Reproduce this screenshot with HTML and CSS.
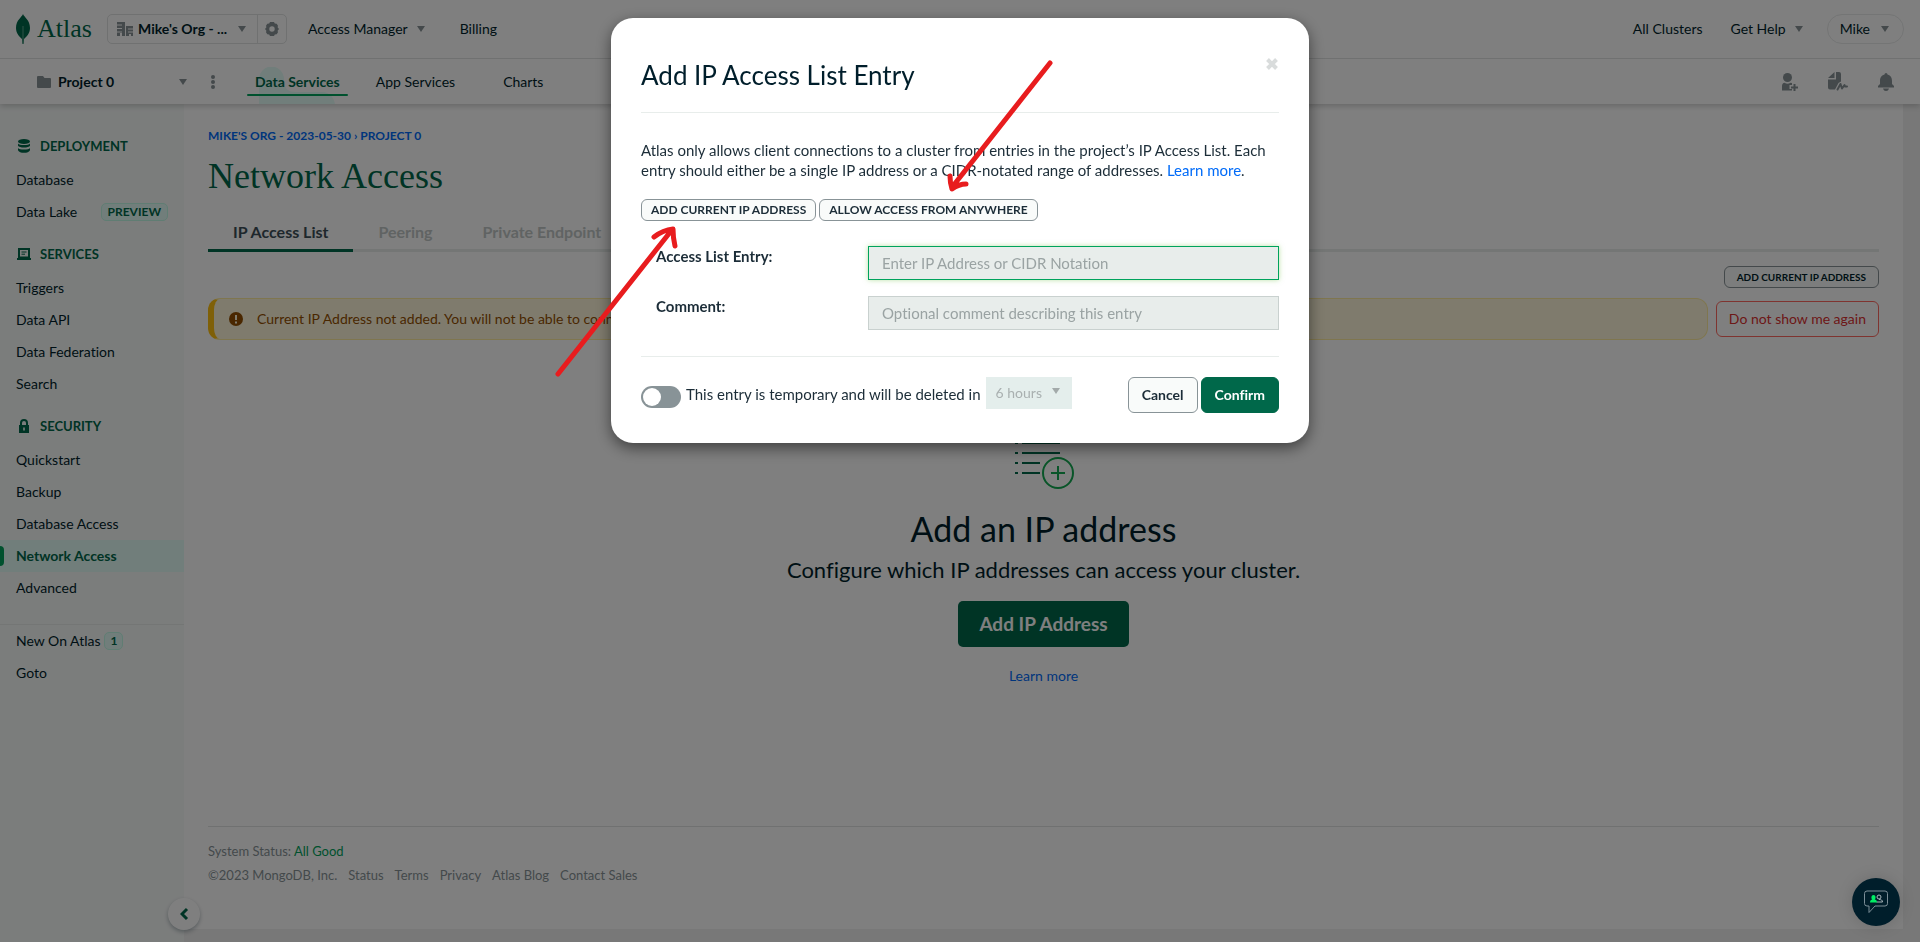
FILE: index.html
```
<!DOCTYPE html>
<html lang="en">
<head>
<meta charset="utf-8">
<title>Network Access | Atlas</title>
<link rel="stylesheet" href="styles.css">
</head>
<body>
<svg class="defs" width="0" height="0" aria-hidden="true">
  <symbol id="caret" viewBox="0 0 8 6"><path d="M0 0h8L4 6z" fill="currentColor"/></symbol>
</svg>
<div class="page">
  <header class="header">
    <div class="bar bar-org">
      <a class="logo" href="#">
        <svg width="14" height="30" viewBox="0 0 14 30"><path d="M7 0c1 3 7 6 7 14 0 6-4 9-6 11l-.5 5h-1L6 25C4 23 0 20 0 14 0 6 6 3 7 0z" fill="#00684a"/><path d="M7 12v16" stroke="#5fa590" stroke-width="1"/></svg>
        <span>Atlas</span>
      </a>
      <div class="org">
        <button class="org-pick" type="button">
          <svg width="16" height="15" viewBox="0 0 16 15"><path d="M0 0h8v14H5v-3H3v3H0zM9 4h7v10h-2v-2h-2v2H9z" fill="#889397"/><path d="M0 3h5M0 6.500h5M0 10h5M11 7h5M11 10h5" stroke="#fff" stroke-width="1"/></svg>
          <b>Mike's Org - ...</b>
          <svg class="caret" width="8" height="6"><use href="#caret"/></svg>
        </button>
        <button class="org-gear" type="button" aria-label="Settings">
          <svg width="14" height="14" viewBox="0 0 14 14"><path fill="#889397" fill-rule="evenodd" d="M5 0h4l.8 1.600 1.900.1 1.300 2-.4 1.600L14 7l-1.400 1.700.4 1.600-1.300 2-1.900.1L9 14H5l-.8-1.600-1.900-.1-1.300-2 .4-1.600L0 7l1.400-1.700L1 3.700l1.300-2 1.900-.1zM7 4.300a2.700 2.700 0 1 0 0 5.400 2.700 2.700 0 0 0 0-5.400z"/></svg>
        </button>
      </div>
      <nav class="org-nav"><a href="#">Access Manager <svg class="caret" width="8" height="6"><use href="#caret"/></svg></a><a href="#">Billing</a></nav>
      <nav class="user-nav"><a href="#">All Clusters</a><a href="#">Get Help <svg class="caret" width="8" height="6"><use href="#caret"/></svg></a>
        <button class="user" type="button">Mike <svg class="caret" width="8" height="6"><use href="#caret"/></svg></button></nav>
    </div>
    <div class="bar bar-project">
      <button class="project" type="button">
        <svg width="14" height="12" viewBox="0 0 14 12"><path fill="#889397" d="M1 0h5l1.500 2H13a1 1 0 0 1 1 1v8a1 1 0 0 1-1 1H1a1 1 0 0 1-1-1V1a1 1 0 0 1 1-1z"/></svg>
        <b>Project 0</b>
        <svg class="caret" width="8" height="6"><use href="#caret"/></svg>
      </button>
      <button class="more" type="button" aria-label="Project options"><svg width="4" height="14" viewBox="0 0 4 14" fill="#889397"><circle cx="2" cy="2" r="2"/><circle cx="2" cy="7" r="2"/><circle cx="2" cy="12" r="2"/></svg></button>
      <nav class="services">
        <a class="on" href="#"><svg class="blob" width="76" height="37" viewBox="0 0 76 37"><path fill="#e3fcf7" d="M0 37V12a12 12 0 0 1 25 0c0 10 4 13 12 13h26c8 0 12 6 13 12z"/></svg><span>Data Services</span></a>
        <a href="#">App Services</a>
        <a href="#">Charts</a>
      </nav>
      <div class="tools">
        <button type="button" aria-label="Invite"><svg width="17" height="18" viewBox="0 0 17 18" fill="#889397"><circle cx="6.500" cy="4.500" r="4.500"/><path d="M1 17.500V13c0-2 1-3 2.500-3.300 2 1.300 4 1.300 6 0L11 10v2H8.500v4H11v1.500z"/><path d="M12.500 11h2v2.500H17v2h-2.500V18h-2v-2.500H10v-2h2.500z"/></svg></button>
        <button type="button" aria-label="Activity"><svg width="20" height="19" viewBox="0 0 20 19" fill="#889397"><path d="M6.500 0v6H0zM8 0h3a2 2 0 0 1 2 2v7.500L10.500 11 7 17.500H2a2 2 0 0 1-2-2v-8h8z"/><path d="M9.500 17.500l3-5.500 1.500 4.500 2.500-3.500.5 1.500h2" fill="none" stroke="#889397" stroke-width="2" stroke-linejoin="round" stroke-linecap="round"/></svg></button>
        <button type="button" aria-label="Alerts"><svg width="16" height="18" viewBox="0 0 16 18" fill="#889397"><path d="M8 0a1.500 1.500 0 0 1 1.500 1.500C13 2.500 14 5 14 8v3l2 2v1.500H0V13l2-2V8c0-3 1-5.500 4.500-6.500A1.500 1.500 0 0 1 8 0zM5 15.500h6C10.500 17.200 9.500 18 8 18s-2.500-.8-3-2.500z"/></svg></button>
      </div>
    </div>
  </header>

  <div class="shell">
    <nav class="side">
      <h2><svg width="14" height="14" viewBox="0 0 14 14" fill="#00684a"><ellipse cx="7" cy="2.500" rx="6" ry="2.500"/><path d="M1 4.500c1 2 11 2 12 0v2.300c-1 2.400-11 2.400-12 0zM1 9c1 2 11 2 12 0v2.300c-1 3.400-11 3.400-12 0z"/></svg>DEPLOYMENT</h2>
      <a href="#">Database</a>
      <a href="#">Data Lake <span class="badge preview">PREVIEW</span></a>
      <h2><svg width="14" height="12" viewBox="0 0 14 12"><path fill="#00684a" fill-rule="evenodd" d="M1 0h12v10h1v2H0v-2h1zM3 2v6.500h8V2z"/><path d="M4.500 4h5M4.500 6.200h3.500" stroke="#00684a" stroke-width="1"/></svg>SERVICES</h2>
      <a href="#">Triggers</a>
      <a href="#">Data API</a>
      <a href="#">Data Federation</a>
      <a href="#">Search</a>
      <h2><svg width="14" height="14" viewBox="0 0 14 14"><path fill="#00684a" fill-rule="evenodd" d="M3 6V4a4 4 0 0 1 8 0v2h1v8H2V6zM5 6h4V4a2 2 0 0 0-4 0zM6.200 8.500v3h1.600v-3z"/></svg>SECURITY</h2>
      <a href="#">Quickstart</a>
      <a href="#">Backup</a>
      <a href="#">Database Access</a>
      <a class="on" href="#">Network Access</a>
      <a href="#">Advanced</a>
      <hr>
      <a href="#">New On Atlas <span class="badge">1</span></a>
      <a href="#">Goto</a>
      <button class="collapse" type="button" aria-label="Collapse navigation"><svg width="9" height="14" viewBox="0 0 9 14"><path d="M7 2L2 7l5 5" fill="none" stroke="#00684a" stroke-width="3"/></svg></button>
    </nav>

    <main class="main">
      <a class="crumbs" href="#">MIKE'S ORG - 2023-05-30 › PROJECT 0</a>
      <h1>Network Access</h1>
      <nav class="tabs"><a class="on" href="#">IP Access List</a><a href="#">Peering</a><a href="#">Private Endpoint</a></nav>
      <button class="pill small" type="button">ADD CURRENT IP ADDRESS</button>
      <div class="notice">
        <p class="alert"><svg width="14" height="14" viewBox="0 0 14 14"><circle cx="7" cy="7" r="7" fill="#944f01"/><path d="M7 3v5M7 9.500v2" stroke="#fef7db" stroke-width="2"/></svg>Current IP Address not added. You will not be able to connect</p>
        <button class="btn danger" type="button">Do not show me again</button>
      </div>
      <section class="empty">
        <svg width="60" height="64" viewBox="0 0 60 64" fill="none" stroke-width="2"><path stroke="#00684a" d="M1 17h3M8 17h38M1 27h3M8 27h38M1 37h3M8 37h18M1 47h3M8 47h18"/><circle cx="44" cy="47" r="15" stroke="#13aa52"/><path stroke="#13aa52" d="M44 40v14M37 47h14"/></svg>
        <h2>Add an IP address</h2>
        <p>Configure which IP addresses can access your cluster.</p>
        <button class="big" type="button">Add IP Address</button>
        <a href="#">Learn more</a>
      </section>
      <footer class="footer">
        <p>System Status: <a class="good" href="#">All Good</a></p>
        <p class="links"><span>©2023 MongoDB, Inc.</span><a href="#">Status</a><a href="#">Terms</a><a href="#">Privacy</a><a href="#">Atlas Blog</a><a href="#">Contact Sales</a></p>
      </footer>
    </main>
  </div>
</div>

<div class="backdrop">
  <form class="modal" role="dialog" aria-labelledby="modal-title">
    <div class="modal-head">
      <h2 id="modal-title">Add IP Access List Entry</h2>
      <button class="close" type="button" aria-label="Close"><svg width="12" height="12" viewBox="0 0 12 12"><path d="M1.500 1.500l9 9M10.500 1.500l-9 9" stroke="#d9dcdc" stroke-width="4"/></svg></button>
    </div>
    <div class="modal-body">
      <p>Atlas only allows client connections to a cluster from entries in the project’s IP Access List. Each entry should either be a single IP address or a CIDR-notated range of addresses. <a href="#">Learn more</a>.</p>
      <div class="pills"><button class="pill" type="button">ADD CURRENT IP ADDRESS</button><button class="pill" type="button">ALLOW ACCESS FROM ANYWHERE</button></div>
      <div class="field"><label for="entry">Access List Entry:</label><input class="focused" id="entry" type="text" placeholder="Enter IP Address or CIDR Notation"></div>
      <div class="field"><label for="comment">Comment:</label><input id="comment" type="text" placeholder="Optional comment describing this entry"></div>
    </div>
    <div class="modal-foot">
      <input class="toggle" id="temp" type="checkbox"><label for="temp">This entry is temporary and will be deleted in</label>
      <span class="pick"><select aria-label="Deleted in" disabled><option>6 hours</option></select><svg width="8" height="6"><use href="#caret"/></svg></span>
      <div class="actions"><button class="btn" type="button">Cancel</button><button class="btn primary" type="submit">Confirm</button></div>
    </div>
  </form>
</div>

<svg class="arrows" width="1100" height="400" viewBox="0 0 1100 400" fill="none" stroke="#e81c1e" stroke-width="5" stroke-linecap="round" stroke-linejoin="round" aria-hidden="true">
  <path d="M558 374L671 231M654 237q9-7 19-8q0 9 2 17"/>
  <path d="M1050 63L953 186M950 176q0 7 2 13q7-5 14-5"/>
</svg>

<button class="chat" type="button" aria-label="Chat">
  <svg width="24" height="24" viewBox="0 0 24 24" fill="none"><path d="M3 1h18a2.500 2.500 0 0 1 2.500 2.500v10A2.500 2.500 0 0 1 21 16H11l-6 6.500V16H3a2.500 2.500 0 0 1-2.500-2.500v-10A2.500 2.500 0 0 1 3 1z" stroke="#7c8e98"/><g stroke="#a9b5bb"><circle cx="15" cy="7" r="2"/><path d="M12.500 12h6c0-2-1.500-2.500-3.500-2.500"/></g><path fill="#00ed64" d="M6 12.500c0-2 1-2.700 2.300-3C7 8.500 7 5 9.500 5s2.500 3.500 1.200 4.500c1.300.3 2.300 1 2.300 3z"/></svg>
</button>
</body>
</html>
```

FILE: styles.css
```
* { box-sizing: border-box; }
body {
  margin: 0;
  font: 14px/20px Lato, "Liberation Sans", sans-serif;
  font-variant-ligatures: none;
  color: #001e2b;
  background: #f0f0f0;
}
h1, h2, p { margin: 0; font-weight: 400; }
a { color: inherit; text-decoration: none; }
button { font: inherit; color: inherit; background: none; border: 0; padding: 0; cursor: pointer; }
svg { display: block; flex: none; }
.defs { position: absolute; }
.caret { color: #889397; }

.page { display: flex; flex-direction: column; min-height: 100vh; }

/* Header */
.header { position: relative; z-index: 1; background: #fff; box-shadow: 0 2px 6px rgba(0, 0, 0, .2); }
.bar { display: flex; align-items: center; }
.bar-org { height: 59px; padding: 0 16px; border-bottom: 1px solid #e0e2e2; }
.logo { display: flex; align-items: center; gap: 7px; width: 91px; height: 34px; font: 26px/34px "Liberation Serif", serif; color: #00684a; }
.org { display: flex; width: 180px; height: 30px; border: 1px solid #e0e2e2; border-radius: 5px; }
.org-pick { display: flex; align-items: center; flex: 1; gap: 5px; padding: 0 11px 0 9px; white-space: nowrap; }
.org-pick .caret, .project .caret { margin-left: auto; }
.org-gear { display: flex; align-items: center; justify-content: center; width: 29px; border-left: 1px solid #e0e2e2; }
.org-nav { display: flex; gap: 35px; margin-left: 21px; }
.org-nav a, .user-nav a { display: flex; align-items: center; gap: 9px; }
.user-nav { display: flex; align-items: center; gap: 24px; margin-left: auto; }
.user-nav a:first-child { margin-right: 4px; }
.user { display: flex; align-items: center; gap: 11px; height: 30px; padding: 0 14px 0 12px; border: 1px solid #e8eaea; border-radius: 15px; }

.bar-project { height: 45px; padding-right: 26px; }
.project { display: flex; align-items: center; gap: 7px; width: 187px; padding-left: 37px; }
.more { margin-left: 24px; }
.services { display: flex; gap: 20px; align-self: stretch; margin-left: 32px; }
.services a { position: relative; display: flex; align-items: center; padding: 0 8px; }
.services a:last-child { margin-left: 12px; }
.services .on { font-weight: 700; color: #00684a; }
.services .on span { position: relative; }
.services .on::after { content: ""; position: absolute; left: 0; right: 0; bottom: 8px; height: 2px; background: #00a35c; border-radius: 1px; }
.blob { position: absolute; left: 12px; bottom: 0; }
.tools { display: flex; align-items: center; gap: 30px; margin-left: auto; }

/* Side navigation */
.shell { flex: 1; display: grid; grid-template-columns: 184px 1fr; }
.side { position: relative; padding-top: 16px; background: #f7faf9; }
.side a { display: flex; align-items: center; height: 32px; padding-left: 16px; }
.side h2 { display: flex; align-items: center; gap: 9px; height: 44px; padding: 8px 0 0 17px; font-size: 13px; font-weight: 700; color: #00684a; }
.side .on { position: relative; background: #e3fcf7; color: #00684a; font-weight: 700; }
.side .on::before { content: ""; position: absolute; left: 0; top: 6px; width: 4px; height: 20px; background: #00a35c; border-radius: 0 4px 4px 0; }
.side hr { height: 1px; margin: 20px 0 0; border: 0; background: #e8edeb; }
.badge { margin-left: 4px; padding: 0 5px; font-size: 12px; line-height: 16px; font-weight: 700; color: #00684a; background: #e3fcf7; border: 1px solid #c0fae6; border-radius: 5px; }
.preview { margin: 0 16px 0 auto; padding: 0 6px; }
.collapse { position: absolute; right: -16px; bottom: 12px; display: flex; align-items: center; justify-content: center; width: 32px; height: 32px; background: #fff; border-radius: 16px; box-shadow: 0 2px 4px rgba(0, 30, 43, .3); }

/* Main panel */
.main { display: flex; flex-direction: column; margin: 0 17px 13px 0; padding: 22px 24px 0; background: #fff; }
.crumbs { align-self: flex-start; font-size: 12px; font-weight: 700; color: #016bf8; }
.main h1 { margin-top: 8px; font: 36px/44px "Liberation Serif", serif; color: #00684a; }
.tabs { display: flex; margin-top: 20px; font-size: 16px; font-weight: 700; color: #c1c7c6; border-bottom: 3px solid #e8edeb; }
.tabs a { padding: 4px 25px 7px; border-bottom: 3px solid transparent; margin-bottom: -3px; line-height: 20px; }
.tabs .on { color: #3d4f58; border-color: #00684a; }
.pill { height: 22px; padding: 0 9px; font-size: 12px; line-height: 20px; font-weight: 700; background: #f9fbfa; border: 1px solid #889397; border-radius: 6px; }
.small { align-self: flex-end; margin-top: 14px; padding: 0 12px; font-size: 10px; }
.notice { display: flex; align-items: center; gap: 8px; margin-top: 10px; }
.alert { display: flex; align-items: center; flex: 1; gap: 14px; height: 42px; padding-left: 15px; color: #944f01; background: #fef7db; border: 1px solid #ffec9e; border-left: 6px solid #ffc010; border-radius: 12px; }
.btn { height: 36px; padding: 0 13px; font-size: 14px; font-weight: 700; background: #f9fbfa; border: 1px solid #889397; border-radius: 6px; }
.danger { padding: 0 12px; font-weight: 400; color: #db3030; background: #fff; border-color: #ff6960; }
.empty { display: flex; flex-direction: column; align-items: center; margin-top: 86px; }
.empty h2 { margin-top: 19px; font-size: 34px; line-height: 40px; }
.empty p { margin-top: 5px; font-size: 22px; line-height: 32px; }
.big { height: 46px; margin: 15px 0 19px; padding: 0 21px; font-size: 19px; font-weight: 700; color: #fff; background: #00684a; border-radius: 5px; }
.empty a { color: #016bf8; }
.footer { margin-top: auto; padding: 14px 0 44px; font-size: 13px; color: #889397; border-top: 1px solid #e0e2e2; }
.good { color: #00a35c; }
.links { display: flex; gap: 11px; margin-top: 4px; }

/* Dialog */
.backdrop { position: fixed; inset: 0; z-index: 2; padding-top: 18px; background: rgba(0, 0, 0, .5); }
.modal { width: 698px; max-width: 100%; margin: 0 auto; padding: 30px; font-size: 15px; color: #1c2d38; background: #fff; border-radius: 22px; box-shadow: 0 5px 15px rgba(0, 0, 0, .5); }
.modal-head { display: flex; justify-content: space-between; align-items: flex-start; padding: 10px 0 20px; border-bottom: 1px solid #e8edeb; }
.modal-head h2 { font-size: 26px; line-height: 34px; color: #001e2b; }
.close { padding: 0 1px; }
.modal-body { padding: 27px 0 26px; border-bottom: 1px solid #e8edeb; }
.modal-body a { color: #016bf8; }
.pills { display: flex; gap: 3px; margin: 19px 0 25px; }
.field { display: flex; padding-left: 15px; }
.field + .field { margin-top: 16px; }
.field label { width: 212px; font-weight: 700; }
.field input { flex: 1; height: 34px; padding: 0 13px; font: inherit; color: #1c2d38; background: #e8edeb; border: 1px solid #c9d1cf; border-radius: 0; outline: 0; }
.field input::placeholder { color: #9aa3a3; }
.field .focused { border-color: #00a35c; box-shadow: 0 0 5px rgba(120, 200, 80, .5); }
.modal-foot { display: flex; align-items: flex-start; padding-top: 20px; }
.modal-foot label { margin: 7px 5px 0 5px; }
.toggle { appearance: none; width: 40px; height: 22px; margin: 9px 0 0; border-radius: 11px; background: #889397; }
.toggle::before { content: ""; display: block; width: 18px; height: 18px; margin: 2px; border-radius: 9px; background: #fff; }
.pick { position: relative; width: 86px; }
.pick select { appearance: none; display: block; width: 100%; height: 32px; padding: 0 10px; font: inherit; font-size: 14px; color: #a9b0b0; opacity: 1; background: #e4eeec; border: 0; border-radius: 0; }
.pick svg { position: absolute; right: 12px; top: 11px; color: #a3aaaa; }
.actions { display: flex; gap: 3px; margin-left: auto; }
.primary { color: #fff; background: #00684a; border-color: #00684a; }

/* Annotations and floating chat button */
.arrows { position: absolute; left: 0; top: 0; z-index: 3; pointer-events: none; }
.chat { position: fixed; right: 20px; bottom: 16px; z-index: 3; display: flex; align-items: center; justify-content: center; width: 48px; height: 48px; background: #001e2b; border-radius: 24px; box-shadow: 0 0 16px rgba(0, 0, 0, .15); }
```
